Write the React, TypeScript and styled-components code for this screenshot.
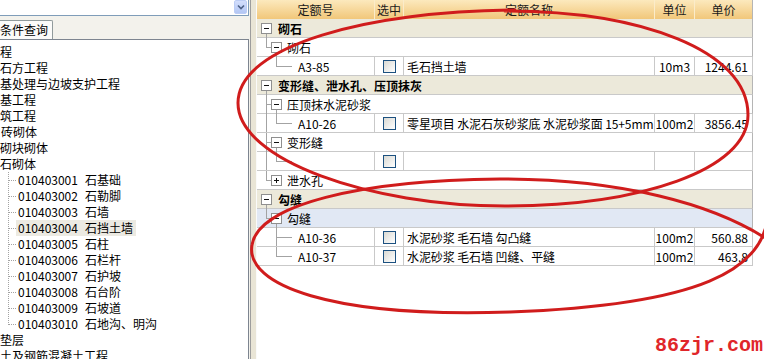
import React from 'react';
import styled, { createGlobalStyle } from 'styled-components';

const GlobalStyle = createGlobalStyle`
  html, body {
    margin: 0;
    padding: 0;
    background: #fff;
  }
  body {
    font-family: "Noto Sans CJK SC", "Noto Sans", sans-serif;
    font-size: 12px;
    color: #000;
  }
`;

const Screen = styled.div`
  position: relative;
  display: flex;
  width: 764px;
  height: 359px;
  overflow: hidden;
  background: #fff;
`;

/* ---------- left side: search tree ---------- */

const LeftPanel = styled.div`
  display: flex;
  flex-direction: column;
  width: 250px;
  flex: none;
  padding-right: 1px;
  box-sizing: border-box;
  background: #f3f2ec;
`;

const Combo = styled.div`
  display: flex;
  justify-content: flex-end;
  height: 16px;
  box-sizing: border-box;
  padding-right: 1px;
  background: #fff;
  border-bottom: 1px solid #7f9db9;
  border-right: 1px solid #7f9db9;
`;

const DropButton = styled.div`
  display: flex;
  align-items: center;
  justify-content: center;
  width: 13px;
  height: 14px;
  box-sizing: border-box;
  border: 1px solid #bccdf5;
  border-radius: 2px;
  background: linear-gradient(#d3defc, #b3c7f4);
`;

const TabBar = styled.div`
  display: flex;
  margin-top: 4px;
  height: 19px;
`;

const Tab = styled.div`
  height: 19px;
  box-sizing: border-box;
  padding-right: 4px;
  line-height: 18px;
  background: #fbfbf9;
  border-top: 1px solid #919b9c;
  border-right: 1px solid #919b9c;
  border-top-right-radius: 2px;
  white-space: nowrap;
`;

const TreeBox = styled.div`
  flex: 1;
  min-height: 0;
  padding-top: 4px;
  background: #fff;
  border: 1px solid #7d8590;
  border-left: none;
  border-bottom: none;
  overflow: hidden;
`;

const TreeItem = styled.div<{ $indent: number }>`
  height: 16px;
  line-height: 16px;
  margin-left: ${(p) => p.$indent}px;
  white-space: nowrap;
`;

const TreeLeafRow = styled.div`
  display: flex;
  align-items: center;
  height: 16px;
  white-space: nowrap;
`;

const TreeLabel = styled.div<{ $active?: boolean }>`
  display: flex;
  height: 16px;
  line-height: 16px;
  padding: 0 3px 0 2px;
  background: ${(p) => (p.$active ? '#eceae2' : 'transparent')};
`;

const TreeCode = styled.span`
  width: 67px;
`;

/* ---------- splitter ---------- */

const Splitter = styled.div`
  width: 7px;
  flex: none;
  box-sizing: border-box;
  background: #e9e5d6;
  border-left: 1px solid #9d9d9d;
  border-right: 1px solid #fafafa;
`;

/* ---------- right side: quota grid ---------- */

const RightPanel = styled.div`
  flex: 1;
  background: #fff;
`;

const Grid = styled.div`
  display: grid;
  grid-template-columns: 118px 29px 251px 40px 58px;
  width: 496px;
`;

const HeaderCell = styled.div<{ $edge?: boolean }>`
  display: flex;
  align-items: center;
  justify-content: center;
  height: 19px;
  box-sizing: border-box;
  background: linear-gradient(#fce9bd, #f1c77a);
  border-right: 1px solid ${(p) => (p.$edge ? '#b5b5b5' : '#fbecca')};
  color: #1a1a1a;
`;

type Tone = 'group' | 'plain' | 'selected';

const toneBg: Record<Tone, string> = {
  group: '#ece9da',
  plain: '#fff',
  selected: '#e1e8f4',
};

const SpanRow = styled.div<{ $tone: Tone }>`
  grid-column: 1 / -1;
  display: flex;
  align-items: center;
  height: 19px;
  box-sizing: border-box;
  background: ${(p) => toneBg[p.$tone]};
  border-bottom: 1px solid #c9c9c9;
  border-right: 1px solid #b5b5b5;
  font-weight: ${(p) => (p.$tone === 'group' ? 'bold' : 'normal')};
  white-space: nowrap;
`;

const Cell = styled.div<{ $align?: 'left' | 'center' | 'right' }>`
  display: flex;
  align-items: center;
  justify-content: ${(p) =>
    p.$align === 'center' ? 'center' : p.$align === 'right' ? 'flex-end' : 'flex-start'};
  height: 19px;
  box-sizing: border-box;
  padding: ${(p) => (p.$align === 'right' ? '0 4px 0 0' : p.$align === 'center' ? '0' : '0 0 0 3px')};
  border-right: 1px solid #c9c9c9;
  border-bottom: 1px solid #c9c9c9;
  white-space: nowrap;
  overflow: hidden;
`;

const CodeCell = styled(Cell)`
  padding: 0;
`;

const NameCell = styled(Cell)`
  letter-spacing: -0.1px;
`;

const CheckBox = styled.span`
  width: 13px;
  height: 13px;
  box-sizing: border-box;
  border: 1px solid #1c5180;
  background: linear-gradient(135deg, #d9d9d3, #ffffff);
`;

const Guide = styled.svg`
  display: block;
  flex: none;
  align-self: flex-start;
`;

const Watermark = styled.div`
  position: absolute;
  right: 1px;
  bottom: 2px;
  font-family: "Liberation Mono", "DejaVu Sans Mono", monospace;
  font-size: 20px;
  font-weight: bold;
  color: #e0262a;
  line-height: 22px;
`;

const Marks = styled.svg`
  position: absolute;
  left: 0;
  top: 0;
  pointer-events: none;
`;

/* ---------- drawings ---------- */

const LINE = '#a3a3a3';

function Expander({ c, open }: { c: number; open: boolean }) {
  return (
    <g>
      <rect x={c - 4.5} y={4.5} width={10} height={10} fill="#fff" stroke="#8f8f8f" />
      <line x1={c - 2} x2={c + 3} y1={9.5} y2={9.5} stroke="#111" />
      {!open && <line x1={c + 0.5} x2={c + 0.5} y1={7} y2={12} stroke="#111" />}
    </g>
  );
}

function GroupGuide() {
  return (
    <Guide width={21} height={19} shapeRendering="crispEdges">
      <line x1={9.5} x2={9.5} y1={15} y2={19} stroke={LINE} />
      <Expander c={9} open />
    </Guide>
  );
}

function SubGuide({ last, open }: { last: boolean; open: boolean }) {
  return (
    <Guide width={30} height={19} shapeRendering="crispEdges">
      <line x1={9.5} x2={9.5} y1={0} y2={last ? 10 : 19} stroke={LINE} />
      <line x1={9.5} x2={14} y1={9.5} y2={9.5} stroke={LINE} />
      {open && <line x1={19.5} x2={19.5} y1={15} y2={19} stroke={LINE} />}
      <Expander c={19} open={open} />
    </Guide>
  );
}

function LeafGuide({ rail, last }: { rail: boolean; last: boolean }) {
  return (
    <Guide width={41} height={19} shapeRendering="crispEdges">
      {rail && <line x1={9.5} x2={9.5} y1={0} y2={19} stroke={LINE} />}
      <line x1={19.5} x2={19.5} y1={0} y2={last ? 10 : 19} stroke={LINE} />
      <line x1={19.5} x2={35} y1={9.5} y2={9.5} stroke={LINE} />
    </Guide>
  );
}

function TreeDots({ last }: { last: boolean }) {
  return (
    <Guide width={16} height={16} shapeRendering="crispEdges">
      <line x1={8.5} x2={8.5} y1={0} y2={last ? 9 : 16} stroke={LINE} strokeDasharray="1 1" />
      <line x1={9} x2={16} y1={8.5} y2={8.5} stroke={LINE} strokeDasharray="1 1" />
    </Guide>
  );
}

/* ---------- data ---------- */

const treeTop = [
  { text: '程', indent: 0 },
  { text: '石方工程', indent: 0 },
  { text: '基处理与边坡支护工程', indent: 0 },
  { text: '基工程', indent: 0 },
  { text: '筑工程', indent: 0 },
  { text: '砖砌体', indent: 1 },
  { text: '砌块砌体', indent: 0 },
  { text: '石砌体', indent: 0 },
];

const stoneItems = [
  ['010403001', '石基础'],
  ['010403002', '石勒脚'],
  ['010403003', '石墙'],
  ['010403004', '石挡土墙'],
  ['010403005', '石柱'],
  ['010403006', '石栏杆'],
  ['010403007', '石护坡'],
  ['010403008', '石台阶'],
  ['010403009', '石坡道'],
  ['010403010', '石地沟、明沟'],
];

type Row =
  | { type: 'group'; label: string }
  | { type: 'sub'; label: string; last: boolean; open: boolean; selected?: boolean }
  | {
      type: 'leaf';
      code: string;
      name: string;
      unit: string;
      price: string;
      rail: boolean;
      last: boolean;
    };

const rows: Row[] = [
  { type: 'group', label: '砌石' },
  { type: 'sub', label: '砌石', last: true, open: true },
  { type: 'leaf', code: 'A3-85', name: '毛石挡土墙', unit: '10m3', price: '1244.61', rail: false, last: true },
  { type: 'group', label: '变形缝、泄水孔、压顶抹灰' },
  { type: 'sub', label: '压顶抹水泥砂浆', last: false, open: true },
  {
    type: 'leaf',
    code: 'A10-26',
    name: '零星项目 水泥石灰砂浆底 水泥砂浆面 15+5mm',
    unit: '100m2',
    price: '3856.45',
    rail: true,
    last: true,
  },
  { type: 'sub', label: '变形缝', last: false, open: true },
  { type: 'leaf', code: '', name: '', unit: '', price: '', rail: true, last: true },
  { type: 'sub', label: '泄水孔', last: true, open: false },
  { type: 'group', label: '勾缝' },
  { type: 'sub', label: '勾缝', last: true, open: true, selected: true },
  { type: 'leaf', code: 'A10-36', name: '水泥砂浆 毛石墙 勾凸缝', unit: '100m2', price: '560.88', rail: false, last: false },
  { type: 'leaf', code: 'A10-37', name: '水泥砂浆 毛石墙 凹缝、平缝', unit: '100m2', price: '463.8', rail: false, last: true },
];

const headers = ['定额号', '选中', '定额名称', '单位', '单价'];

const App: React.FC = () => {
  return (
    <Screen>
      <GlobalStyle />
      <LeftPanel>
        <Combo>
          <DropButton>
            <svg width="8" height="6" viewBox="0 0 8 6">
              <path d="M1 1.5 L4 4.5 L7 1.5" fill="none" stroke="#4d6185" strokeWidth="1.6" />
            </svg>
          </DropButton>
        </Combo>
        <TabBar>
          <Tab>条件查询</Tab>
        </TabBar>
        <TreeBox>
          {treeTop.map((t) => (
            <TreeItem key={t.text} $indent={t.indent}>
              {t.text}
            </TreeItem>
          ))}
          {stoneItems.map(([code, name], i) => (
            <TreeLeafRow key={code}>
              <TreeDots last={i === stoneItems.length - 1} />
              <TreeLabel $active={code === '010403004'}>
                <TreeCode>{code}</TreeCode>
                <span>{name}</span>
              </TreeLabel>
            </TreeLeafRow>
          ))}
          <TreeItem $indent={0}>垫层</TreeItem>
          <TreeItem $indent={0}>土及钢筋混凝土工程</TreeItem>
        </TreeBox>
      </LeftPanel>

      <Splitter />

      <RightPanel>
        <Grid>
          {headers.map((h, i) => (
            <HeaderCell key={h} $edge={i === headers.length - 1}>
              {h}
            </HeaderCell>
          ))}
          {rows.map((r, i) => {
            if (r.type === 'group') {
              return (
                <SpanRow key={i} $tone="group">
                  <GroupGuide />
                  {r.label}
                </SpanRow>
              );
            }
            if (r.type === 'sub') {
              return (
                <SpanRow key={i} $tone={r.selected ? 'selected' : 'plain'}>
                  <SubGuide last={r.last} open={r.open} />
                  {r.label}
                </SpanRow>
              );
            }
            return (
              <React.Fragment key={i}>
                <CodeCell>
                  <LeafGuide rail={r.rail} last={r.last} />
                  {r.code}
                </CodeCell>
                <Cell $align="center">
                  <CheckBox />
                </Cell>
                <NameCell>{r.name}</NameCell>
                <Cell $align="center">{r.unit}</Cell>
                <Cell $align="right">{r.price}</Cell>
              </React.Fragment>
            );
          })}
        </Grid>
      </RightPanel>

      <Watermark>86zjr.com</Watermark>

      <Marks width={764} height={359} viewBox="0 0 764 359">
        <path
          d="M505 11 C640 11 748 50 748 115 C748 170 640 206 505 206 C370 206 238 160 238 103 C238 45 370 11 515 10"
          fill="none"
          stroke="#d01c1c"
          strokeWidth={3}
          strokeLinecap="round"
        />
        <path
          d="M768 212 C766 270 700 305 510 312 C330 318 245 285 252 245 C258 205 360 180 500 179 C610 179 720 200 785 252"
          fill="none"
          stroke="#d01c1c"
          strokeWidth={3}
          strokeLinecap="round"
        />
      </Marks>
    </Screen>
  );
};

export default App;
